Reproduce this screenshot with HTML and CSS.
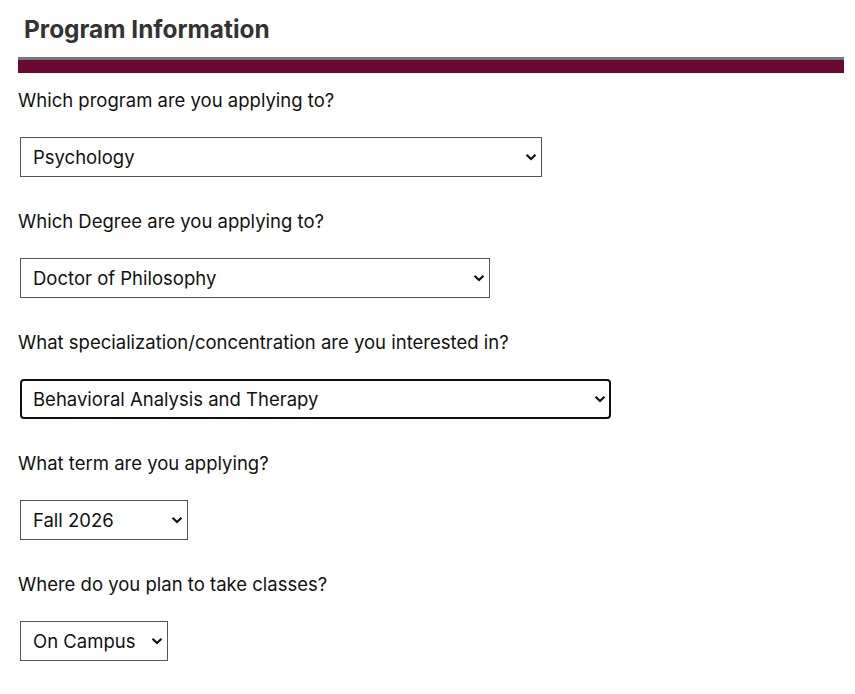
FILE: index.html
```html
<!DOCTYPE html>
<html lang="en">
<head>
    <meta charset="UTF-8">
    <meta name="viewport" content="width=device-width, initial-scale=1.0">
    <title>Program Information</title>
    <link rel="stylesheet" href="styles.css">
</head>
<body>
    <div class="form-section">
        <h2 class="section-title">Program Information</h2>
        <div class="section-bar"></div>

        <div class="field">
            <label for="program">Which program are you applying to?</label>
            <div class="select-wrap">
                <select id="program" class="w-program">
                    <option>Psychology</option>
                </select>
                <svg class="chevron" viewBox="0 0 12 8"><path d="M1.5 1.8 L6 6 L10.5 1.8"/></svg>
            </div>
        </div>

        <div class="field">
            <label for="degree">Which Degree are you applying to?</label>
            <div class="select-wrap">
                <select id="degree" class="w-degree">
                    <option>Doctor of Philosophy</option>
                </select>
                <svg class="chevron" viewBox="0 0 12 8"><path d="M1.5 1.8 L6 6 L10.5 1.8"/></svg>
            </div>
        </div>

        <div class="field">
            <label for="concentration">What specialization/concentration are you interested in?</label>
            <div class="select-wrap">
                <select id="concentration" class="w-concentration focused">
                    <option>Behavioral Analysis and Therapy</option>
                </select>
                <svg class="chevron" viewBox="0 0 12 8"><path d="M1.5 1.8 L6 6 L10.5 1.8"/></svg>
            </div>
        </div>

        <div class="field">
            <label for="term">What term are you applying?</label>
            <div class="select-wrap">
                <select id="term" class="w-term">
                    <option>Fall 2026</option>
                </select>
                <svg class="chevron" viewBox="0 0 12 8"><path d="M1.5 1.8 L6 6 L10.5 1.8"/></svg>
            </div>
        </div>

        <div class="field">
            <label for="location">Where do you plan to take classes?</label>
            <div class="select-wrap">
                <select id="location" class="w-location">
                    <option>On Campus</option>
                </select>
                <svg class="chevron" viewBox="0 0 12 8"><path d="M1.5 1.8 L6 6 L10.5 1.8"/></svg>
            </div>
        </div>
    </div>
</body>
</html>
```

FILE: styles.css
```css
body {
    font-family: Inter, "Liberation Sans", Arial, sans-serif;
    background-color: #ffffff;
    color: #111;
    margin: 0;
    padding: 0;
}

.form-section {
    padding: 0 11px 0 18px;
}

.section-title {
    font-size: 24.4px;
    font-weight: bold;
    color: #333;
    margin: 0;
    padding: 15px 0 0 6px;
    line-height: 28px;
}

.section-bar {
    margin: 14px 0 16px;
    height: 13px;
    background-color: #6b0834;
    border-top: 3px solid #777;
}

.field {
    display: flex;
    flex-direction: column;
    align-items: flex-start;
}

label {
    font-size: 18.5px;
    line-height: 22px;
    color: #111;
    margin-bottom: 26px;
}

.select-wrap {
    position: relative;
    margin: 0 0 33px 2px;
}

select {
    display: block;
    height: 40px;
    padding: 0 28px 0 12px;
    font-family: inherit;
    font-size: 18.5px;
    color: #111;
    background-color: #fff;
    border: 1px solid #555;
    border-radius: 0;
    appearance: none;
    -webkit-appearance: none;
}

select.focused {
    border: 2px solid #111;
    border-radius: 4px;
    padding-left: 11px;
    outline: none;
}

.chevron {
    position: absolute;
    right: 5px;
    top: 16px;
    width: 12px;
    height: 8px;
    fill: none;
    stroke: #111;
    stroke-width: 2.2;
    pointer-events: none;
}

.w-program { width: 522px; }
.w-degree { width: 470px; }
.w-concentration { width: 591px; }
.w-term { width: 168px; }
.w-location { width: 148px; }
```
